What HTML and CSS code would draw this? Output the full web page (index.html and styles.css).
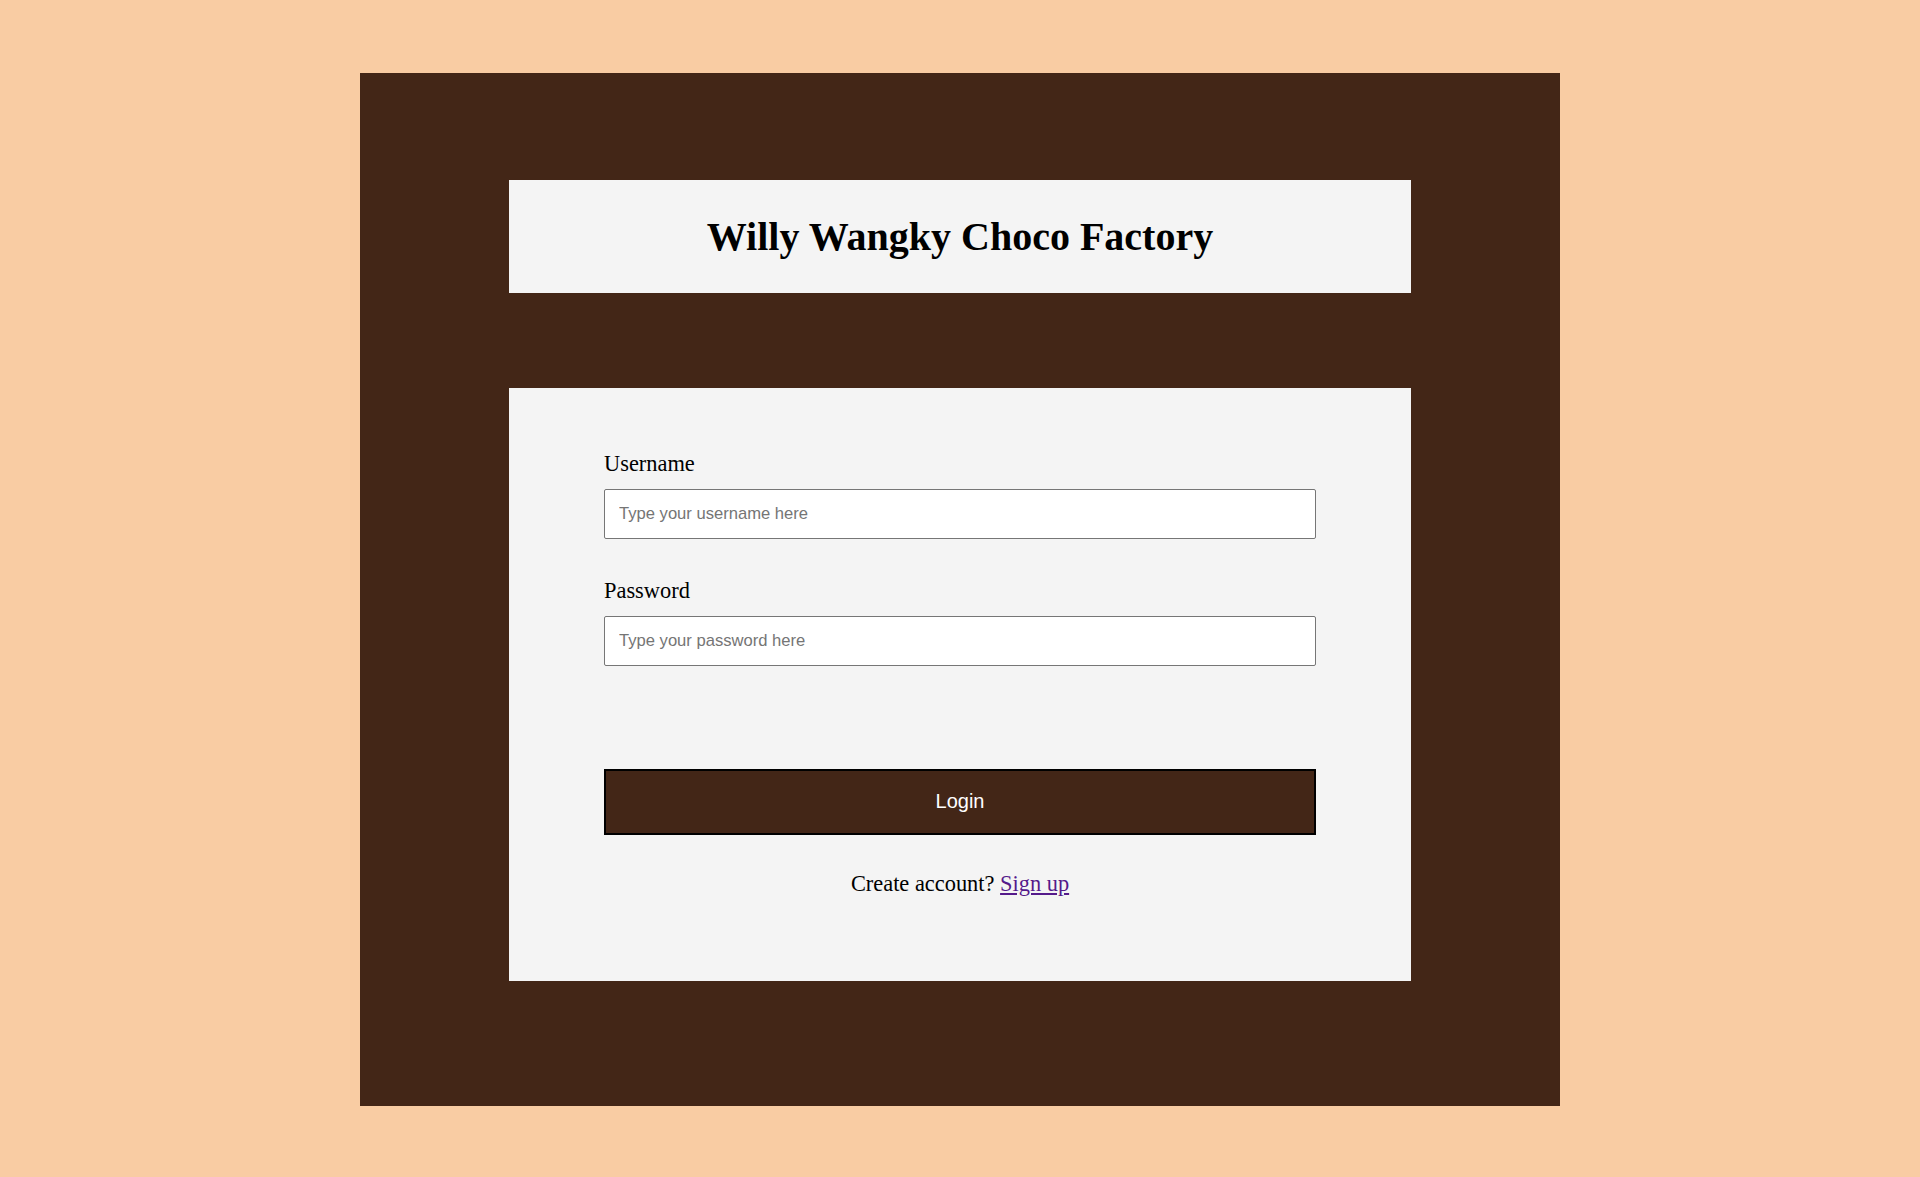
FILE: index.html
```html
<!DOCTYPE html>
<html lang="en">
<head>
<meta charset="utf-8">
<title>Willy Wangky Choco Factory</title>
<link rel="stylesheet" href="styles.css">
</head>
<body>
<main class="frame">
  <header class="banner">
    <h1 class="title">Willy Wangky Choco Factory</h1>
  </header>
  <form class="card">
    <label class="label" for="username">Username</label>
    <input class="field" id="username" type="text" placeholder="Type your username here">
    <label class="label label-second" for="password">Password</label>
    <input class="field" id="password" type="password" placeholder="Type your password here">
    <button class="btn" type="button">Login</button>
    <p class="signup">Create account? <a class="link" href="#">Sign up</a></p>
  </form>
</main>
</body>
</html>
```

FILE: styles.css
```css
html, body {
  margin: 0;
  padding: 0;
}
body {
  background: #f9cca3;
  font-family: "Liberation Serif", "Times New Roman", serif;
  color: #000;
}
.frame {
  width: 1200px;
  margin: 73px auto 0;
  background: #432617;
  padding: 107px 0 125px;
  box-sizing: border-box;
  display: flex;
  flex-direction: column;
  align-items: center;
}
.banner {
  width: 902px;
  height: 113px;
  background: #f4f4f4;
  display: flex;
  align-items: center;
  justify-content: center;
}
.title {
  margin: 0;
  font-size: 40px;
  font-weight: bold;
  line-height: 46px;
  padding-top: 1px;
}
.card {
  width: 902px;
  margin-top: 95px;
  background: #f4f4f4;
  box-sizing: border-box;
  padding: 63px 95px 85px;
  display: flex;
  flex-direction: column;
}
.label {
  font-size: 22.4px;
  line-height: 25px;
  margin-bottom: 13px;
}
.label-second {
  margin-top: 39px;
}
.field {
  height: 50px;
  box-sizing: border-box;
  border: 1px solid #767676;
  border-radius: 2px;
  background: #fff;
  padding: 0 14px;
  font-family: "Liberation Sans", Arial, sans-serif;
  font-size: 16.6px;
  margin: 0;
}
.field::placeholder {
  color: #757575;
}
.btn {
  margin-top: 103px;
  height: 66px;
  background: #432617;
  border: 2px solid #000;
  color: #fff;
  font-family: "Liberation Sans", Arial, sans-serif;
  font-size: 20px;
  line-height: 22px;
  padding: 0 0 2px;
}
.signup {
  margin: 36px 0 0;
  text-align: center;
  font-size: 22.4px;
  line-height: 25px;
}
.link {
  color: #551a8b;
}
```
